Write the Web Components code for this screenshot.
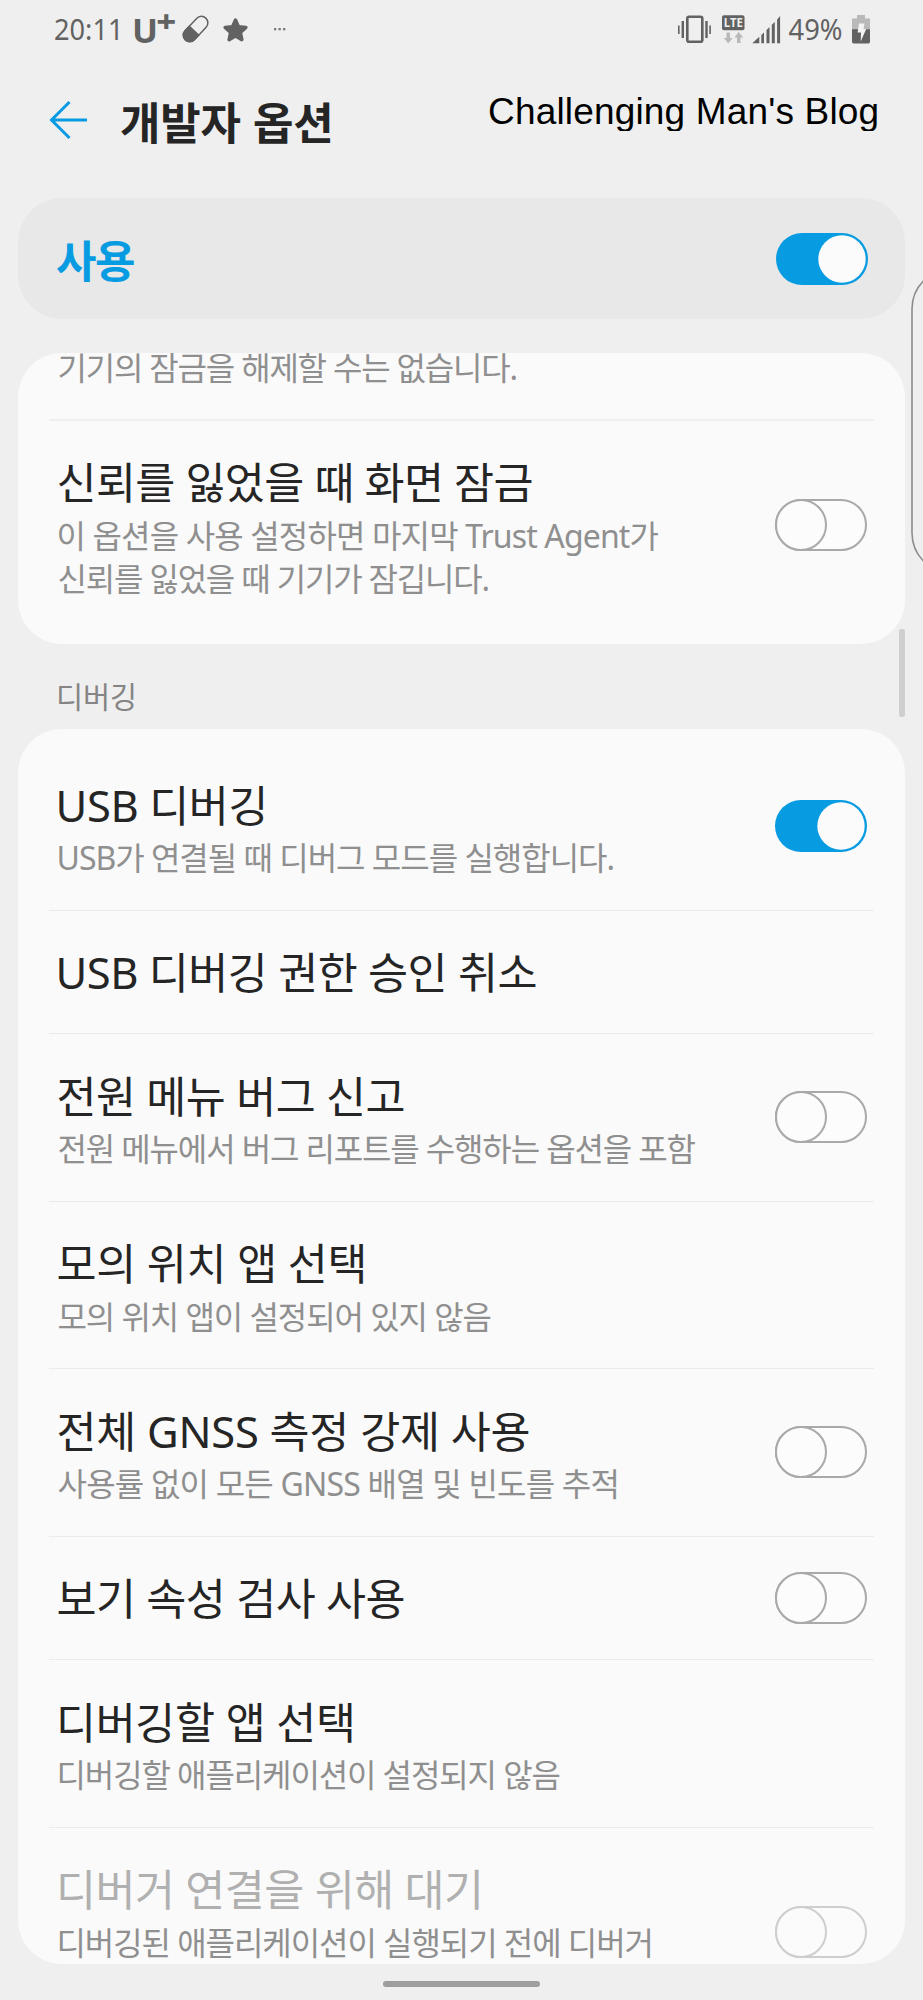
<!DOCTYPE html>
<html lang="ko">
<head>
<meta charset="utf-8">
<title>개발자 옵션</title>
<style>
body{margin:0;background:#efefef;width:923px;height:2000px;overflow:hidden;font-family:"Noto Sans","Noto Sans CJK KR",sans-serif}
</style>
</head>
<body>
<settings-screen></settings-screen>
<script>
const define = (name, html, init) => customElements.define(name, class extends HTMLElement {
  connectedCallback() {
    if (this.shadowRoot) return;
    const t = document.createElement('template');
    t.innerHTML = html;
    this.attachShadow({mode: 'open'}).append(t.content.cloneNode(true));
    if (init) init(this, this.shadowRoot);
  }
});

/* One line of text tracked so that its ink spans the width given in "ink". */
const ctx = document.createElement('canvas').getContext('2d');
define('fit-line', `<style>:host{display:block;white-space:nowrap}</style><slot></slot>`, el => {
  const cs = getComputedStyle(el), text = el.textContent;
  ctx.font = `${cs.fontWeight} ${cs.fontSize} ${cs.fontFamily}`;
  const m = ctx.measureText(text);
  const ink = m.actualBoundingBoxLeft + m.actualBoundingBoxRight;
  el.style.letterSpacing = ((+el.getAttribute('ink') - ink) / (text.length - 1)).toFixed(3) + 'px';
  el.style.marginLeft = (m.actualBoundingBoxLeft + +(el.getAttribute('indent') || 0)).toFixed(2) + 'px';
});

define('toggle-switch', `<style>
:host{display:block;width:92px;height:52px;flex:none}
svg{display:block}
.on,:host([on]) .off{display:none}
:host([on]) .on{display:inline}
:host([dim]){opacity:.55}
</style>
<svg width="92" height="52" viewBox="0 0 92 52">
<g class="off" fill="#fcfcfc" stroke="#a9a9a9" stroke-width="2"><rect x="1" y="1" width="90" height="50" rx="25"/><circle cx="26" cy="26" r="25"/></g>
<g class="on"><rect width="92" height="52" rx="26" fill="#079be2"/><circle cx="66" cy="26" r="23.7" fill="#fbfbfb"/></g>
</svg>`);

define('status-bar', `<style>:host{display:block;height:60px}svg{display:block}</style>
<svg width="923" height="60" viewBox="0 0 923 60" fill="#626262" font-family="Noto Sans">
<text x="54" y="40.300" font-size="28.500" textLength="69.500" lengthAdjust="spacingAndGlyphs">20:11</text>
<text x="132" y="42.800" font-size="34.500" font-weight="700" textLength="26" lengthAdjust="spacingAndGlyphs">U</text>
<text x="156.300" y="31.500" font-size="31" font-weight="800" textLength="20" lengthAdjust="spacingAndGlyphs">+</text>
<g transform="rotate(-47 195.5 29)"><rect x="180.500" y="22.600" width="30" height="13" rx="6.500" fill="none" stroke="#626262" stroke-width="1.500"/><path d="M194 21.900h-7a7.100 7.100 0 0 0 0 14.200h7z"/></g>
<path d="M235.500 20l3 6.700 7.400.8-5.500 5 1.500 7.200-6.400-3.600-6.400 3.600 1.500-7.200-5.500-5 7.400-.8z" stroke="#626262" stroke-width="3.400" stroke-linejoin="round"/>
<g fill="#7a7a7a"><rect x="274" y="28" width="2.300" height="2.300"/><rect x="278.500" y="28" width="2.300" height="2.300"/><rect x="283" y="28" width="2.300" height="2.300"/></g>
<rect x="687.300" y="16.800" width="15" height="25" rx="1.800" fill="none" stroke="#626262" stroke-width="2.600"/>
<path d="M678 25.500h1.600v8.500H678zM681.600 21h2.400v17h-2.400zM705.300 21h2.400v17h-2.400zM709.300 25.500h1.600v8.500h-1.600z"/>
<rect x="722" y="15.300" width="22.500" height="15" rx="2"/>
<text x="723.800" y="27.400" font-size="12.500" font-weight="700" fill="#efefef" textLength="19" lengthAdjust="spacingAndGlyphs">LTE</text>
<path fill="#b9b9b9" d="M726.500 32.500h3.500v5.500h2.700l-4.400 5.500-4.500-5.500h2.700zM737 43v-5.500h-2.700l4.400-5.500 4.500 5.500h-2.700V43z"/>
<path d="M752.300 43.300l7-6.600v6.600zM761.300 35l2.700-2.600v10.900h-2.700zM766.500 30l3-2.900v16.200h-3zM771.800 24.800l3-2.900v21.400h-3zM777.100 19.500l3-3.500v27.300h-3z"/>
<text x="788.500" y="40.300" font-size="28.500" textLength="54" lengthAdjust="spacingAndGlyphs">49%</text>
<path fill="#b9b9b9" d="M857 15h8v3.500h5V30h-18V18.500h5z"/><path d="M852 29.300h18v12.500q0 1.700-1.700 1.700h-14.600q-1.700 0-1.700-1.700z"/>
<path fill="#f3f3f3" d="M859 23.500h5.500l-1 5.500h2.700l-5.500 12.500.3-9h-3.400z"/>
</svg>`);

define('title-bar', `<style>
:host{display:flex;height:138px;align-items:flex-start;box-sizing:border-box;padding-left:49px}
svg{flex:none;margin-top:40px;display:block}
.title{font:700 44px/60px "Noto Sans CJK KR",sans-serif;color:#252525;margin:31px 0 0 32px;width:368px}
.blog{font:37px/44px "Liberation Sans",sans-serif;color:#000;margin-top:30px;height:41px;overflow:hidden;width:400px}
</style>
<svg width="40" height="40" viewBox="0 0 40 40" fill="none" stroke="#079be2" stroke-width="3"><path d="M38 20H2.500M20.500 2L2.500 20l18 18"/></svg>
<div class="title"><fit-line ink="207">개발자 옵션</fit-line></div>
<div class="blog"><fit-line ink="388.500">Challenging Man's Blog</fit-line></div>`);

define('master-switch', `<style>
:host{display:flex;align-items:center;justify-content:space-between;box-sizing:border-box;height:121px;margin:0 18px;padding:0 37px 0 38px;border-radius:44px;background:#e8e8e8;color:#079be2;font:700 44px/60px "Noto Sans CJK KR",sans-serif}
::slotted(*){padding-top:1px}
</style><slot></slot><toggle-switch on></toggle-switch>`);

define('settings-card', `<style>
:host{display:block;box-sizing:border-box;margin:0 18px;border-radius:44px;background:#fafafa;overflow:hidden;padding-top:var(--top,14px)}
</style><slot></slot>`);

/* A preference row: title, optional summary lines, optional switch. */
define('setting-row', `<style>
:host{display:flex;box-sizing:border-box;margin:0 31px;padding:0 7px 0 9.500px;height:var(--h,167.500px);justify-content:space-between;align-items:center;border-bottom:1.500px solid #ebebeb}
:host([last]){border:0}
.text{align-self:flex-start;padding-top:32.500px;width:640px}
::slotted(*){display:block}
::slotted(.t){font-size:43.500px;line-height:59px;margin-bottom:1.500px;color:#252525}
::slotted(.s){font-size:32px;line-height:43px;color:#8f8f8f}
:host([disabled]) ::slotted(.t){color:#b0b0b0}
</style><div class="text"><slot></slot></div><slot name="switch"></slot>`);

define('section-label', `<style>
:host{display:block;height:85px;box-sizing:border-box;padding:32px 0 0 59px;font-size:29.500px;line-height:42px;color:#858585}
</style><slot></slot>`);

define('settings-screen', `<style>
:host{display:block;position:relative;width:923px;height:2000px;overflow:hidden;background:#efefef}
.a{height:291px;margin-top:34px;--top:0}
.b{height:1235px}
.cut{height:66px;padding:0 0 0 40.500px;box-sizing:border-box;font-size:32px;line-height:43px;color:#8f8f8f;display:flow-root}
.cut fit-line{margin-top:-7px}
.edge{position:absolute;right:0;top:260px}
.scroll{position:absolute;left:899px;top:629px;width:6px;height:88px;border-radius:2px;background:#cfcfcf}
.home{width:157px;height:6px;border-radius:3px;background:#9e9e9e;margin:16.500px auto 0}
.rule{height:1.500px;margin:0 31px;background:#efefef}
</style>
<status-bar></status-bar>
<title-bar></title-bar>
<master-switch><fit-line ink="78">사용</fit-line></master-switch>
<settings-card class="a">
 <div class="cut"><fit-line ink="458">기기의 잠금을 해제할 수는 없습니다.</fit-line></div>
 <div class="rule"></div>
 <setting-row last style="--h:208px"><fit-line class="t" ink="473">신뢰를 잃었을 때 화면 잠금</fit-line><fit-line class="s" ink="600">이 옵션을 사용 설정하면 마지막 Trust Agent가</fit-line><fit-line class="s" ink="430">신뢰를 잃었을 때 기기가 잠깁니다.</fit-line><toggle-switch slot="switch"></toggle-switch></setting-row>
</settings-card>
<section-label><fit-line ink="75">디버깅</fit-line></section-label>
<settings-card class="b">
 <setting-row><fit-line class="t" ink="205">USB 디버깅</fit-line><fit-line class="s" ink="555">USB가 연결될 때 디버그 모드를 실행합니다.</fit-line><toggle-switch slot="switch" on></toggle-switch></setting-row>
 <setting-row style="--h:123.500px"><fit-line class="t" ink="477">USB 디버깅 권한 승인 취소</fit-line></setting-row>
 <setting-row><fit-line class="t" ink="345">전원 메뉴 버그 신고</fit-line><fit-line class="s" ink="637">전원 메뉴에서 버그 리포트를 수행하는 옵션을 포함</fit-line><toggle-switch slot="switch"></toggle-switch></setting-row>
 <setting-row><fit-line class="t" ink="305">모의 위치 앱 선택</fit-line><fit-line class="s" ink="432">모의 위치 앱이 설정되어 있지 않음</fit-line></setting-row>
 <setting-row><fit-line class="t" ink="470">전체 GNSS 측정 강제 사용</fit-line><fit-line class="s" ink="558">사용률 없이 모든 GNSS 배열 및 빈도를 추적</fit-line><toggle-switch slot="switch"></toggle-switch></setting-row>
 <setting-row style="--h:123.500px"><fit-line class="t" ink="345">보기 속성 검사 사용</fit-line><toggle-switch slot="switch"></toggle-switch></setting-row>
 <setting-row><fit-line class="t" ink="292" indent="1.5">디버깅할 앱 선택</fit-line><fit-line class="s" ink="500" indent="1">디버깅할 애플리케이션이 설정되지 않음</fit-line></setting-row>
 <setting-row last disabled style="--h:208px"><fit-line class="t" ink="419" indent="1.5">디버거 연결을 위해 대기</fit-line><fit-line class="s" ink="591" indent="1">디버깅된 애플리케이션이 실행되기 전에 디버거</fit-line><toggle-switch slot="switch" dim></toggle-switch></setting-row>
</settings-card>
<div class="home"></div>
<div class="scroll"></div>
<svg class="edge" width="12" height="320" viewBox="0 0 12 320"><rect x="1" y="9" width="80" height="304" rx="40" fill="#efefef" stroke="#8c8c8c" stroke-width="1.600"/></svg>`);
</script>
</body>
</html>
